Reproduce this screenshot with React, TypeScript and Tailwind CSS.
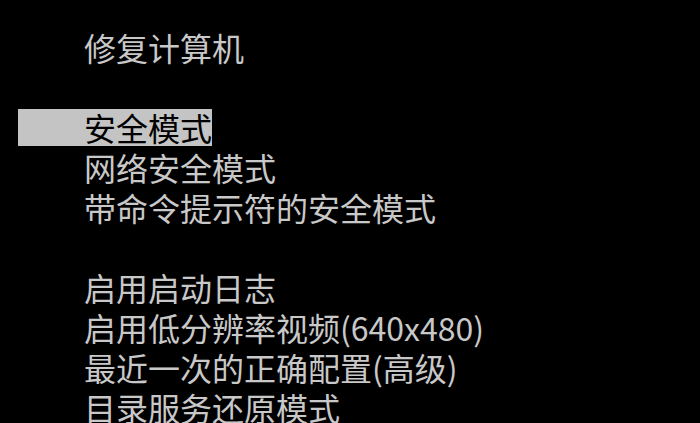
const rows: { text: string; selected?: boolean }[] = [
  { text: "修复计算机" },
  { text: "" },
  { text: "安全模式", selected: true },
  { text: "网络安全模式" },
  { text: "带命令提示符的安全模式" },
  { text: "" },
  { text: "启用启动日志" },
  { text: "启用低分辨率视频(640x480)" },
  { text: "最近一次的正确配置(高级)" },
  { text: "目录服务还原模式" },
];

export default function App() {
  return (
    <main
      className="h-[423px] w-[700px] overflow-hidden bg-black pt-[27px] text-[#c8c8c8]"
      style={{ fontFamily: '"Noto Sans CJK SC", "Liberation Sans", sans-serif' }}
    >
      <div className="flex flex-col">
        {rows.map((row, i) => (
          <div key={i} className="flex h-10 items-center">
            {row.selected ? (
              <span className="ml-[18px] flex h-[37px] w-[194px] items-center bg-[#c4c4c4] pl-[66px] text-[32px] leading-[37px] text-black">
                {row.text}
              </span>
            ) : (
              <span className="pl-[84px] text-[32px] leading-10 whitespace-pre">
                {row.text}
              </span>
            )}
          </div>
        ))}
      </div>
    </main>
  );
}
